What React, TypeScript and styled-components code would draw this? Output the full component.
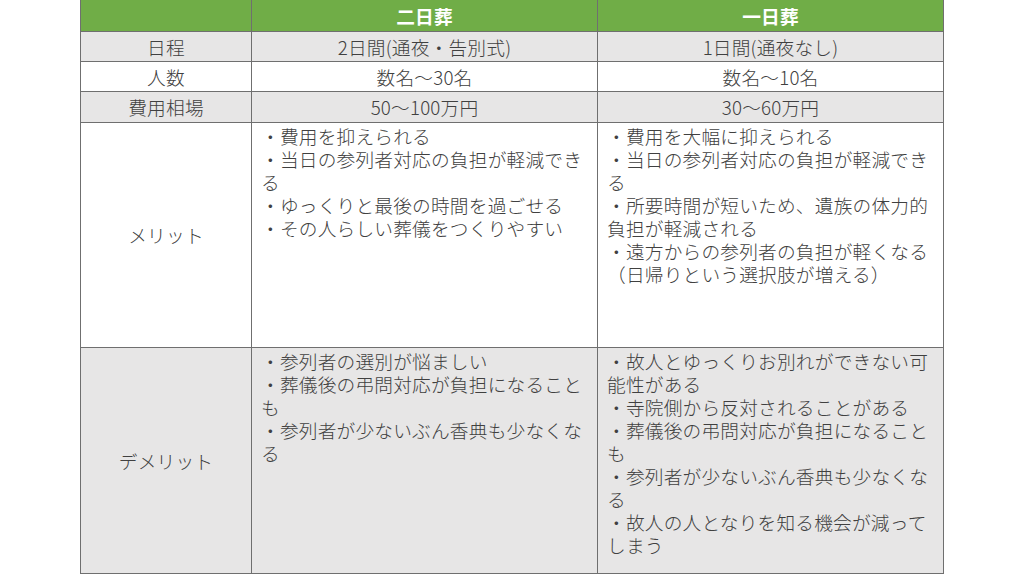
import styled, { createGlobalStyle } from 'styled-components'

const GlobalStyle = createGlobalStyle`
	html, body {
		margin: 0;
		padding: 0;
		background: #ffffff;
	}
	body {
		font-family: 'Noto Sans CJK JP', 'Noto Sans', sans-serif;
	}
`

type Row = {
	label: string
	tall?: boolean
	shaded?: boolean
	height: number
	cells: [string[], string[]]
}

const rows: Row[] = [
	{ label: '日程', shaded: true, height: 30, cells: [['2日間(通夜・告別式)'], ['1日間(通夜なし)']] },
	{ label: '人数', height: 30, cells: [['数名〜30名'], ['数名〜10名']] },
	{ label: '費用相場', shaded: true, height: 31, cells: [['50〜100万円'], ['30〜60万円']] },
	{
		label: 'メリット',
		tall: true,
		height: 225,
		cells: [
			[
				'・費用を抑えられる',
				'・当日の参列者対応の負担が軽減でき',
				'る',
				'・ゆっくりと最後の時間を過ごせる',
				'・その人らしい葬儀をつくりやすい',
			],
			[
				'・費用を大幅に抑えられる',
				'・当日の参列者対応の負担が軽減でき',
				'る',
				'・所要時間が短いため、遺族の体力的',
				'負担が軽減される',
				'・遠方からの参列者の負担が軽くなる',
				'（日帰りという選択肢が増える）',
			],
		],
	},
	{
		label: 'デメリット',
		tall: true,
		shaded: true,
		height: 226,
		cells: [
			[
				'・参列者の選別が悩ましい',
				'・葬儀後の弔問対応が負担になること',
				'も',
				'・参列者が少ないぶん香典も少なくな',
				'る',
			],
			[
				'・故人とゆっくりお別れができない可',
				'能性がある',
				'・寺院側から反対されることがある',
				'・葬儀後の弔問対応が負担になること',
				'も',
				'・参列者が少ないぶん香典も少なくな',
				'る',
				'・故人の人となりを知る機会が減って',
				'しまう',
			],
		],
	},
]

export default function App() {
	return (
		<>
			<GlobalStyle />
			<Page>
				<Table>
					<colgroup>
						<col style={{ width: 171 }} />
						<col style={{ width: 346 }} />
						<col style={{ width: 346 }} />
					</colgroup>
					<thead>
						<tr>
							<HeadCell />
							<HeadCell>二日葬</HeadCell>
							<HeadCell>一日葬</HeadCell>
						</tr>
					</thead>
					<tbody>
						{rows.map(row => (
							<BodyRow key={row.label} $shaded={row.shaded} style={{ height: row.height }}>
								<LabelCell>{row.label}</LabelCell>
								{row.cells.map((lines, i) => (
									<ValueCell key={i} $tall={row.tall}>
										{lines.map((line, j) => (
											<Line key={j}>{line}</Line>
										))}
									</ValueCell>
								))}
							</BodyRow>
						))}
					</tbody>
				</Table>
			</Page>
		</>
	)
}

const Page = styled.div`
	width: 1024px;
	height: 576px;
	overflow: hidden;
	display: flex;
	justify-content: center;
	align-items: flex-start;
`

const Table = styled.table`
	border-collapse: collapse;
	table-layout: fixed;
	width: 864px;
	margin-top: -1px;
	font-size: 18.7px;
	font-weight: 300;
	line-height: 23px;
	letter-spacing: 0.2px;
	color: #404040;
`

const HeadCell = styled.th`
	height: 31px;
	padding: 0 10px;
	background: #70ad47;
	color: #ffffff;
	font-weight: 700;
	text-align: center;
	vertical-align: middle;
	border: 1px solid #6f6f6f;
	border-top: 1px solid #70ad47;
`

const BodyRow = styled.tr<{ $shaded?: boolean }>`
	background: ${p => (p.$shaded ? '#e7e6e6' : '#ffffff')};
`

const LabelCell = styled.td`
	padding: 0 10px 1px;
	text-align: center;
	vertical-align: middle;
	border: 1px solid #6f6f6f;
`

const ValueCell = styled.td<{ $tall?: boolean }>`
	padding: ${p => (p.$tall ? '1px 9px 0 9px' : '0 9px 1px')};
	text-align: ${p => (p.$tall ? 'left' : 'center')};
	vertical-align: ${p => (p.$tall ? 'top' : 'middle')};
	border: 1px solid #6f6f6f;
`

const Line = styled.div`
	white-space: nowrap;
`
